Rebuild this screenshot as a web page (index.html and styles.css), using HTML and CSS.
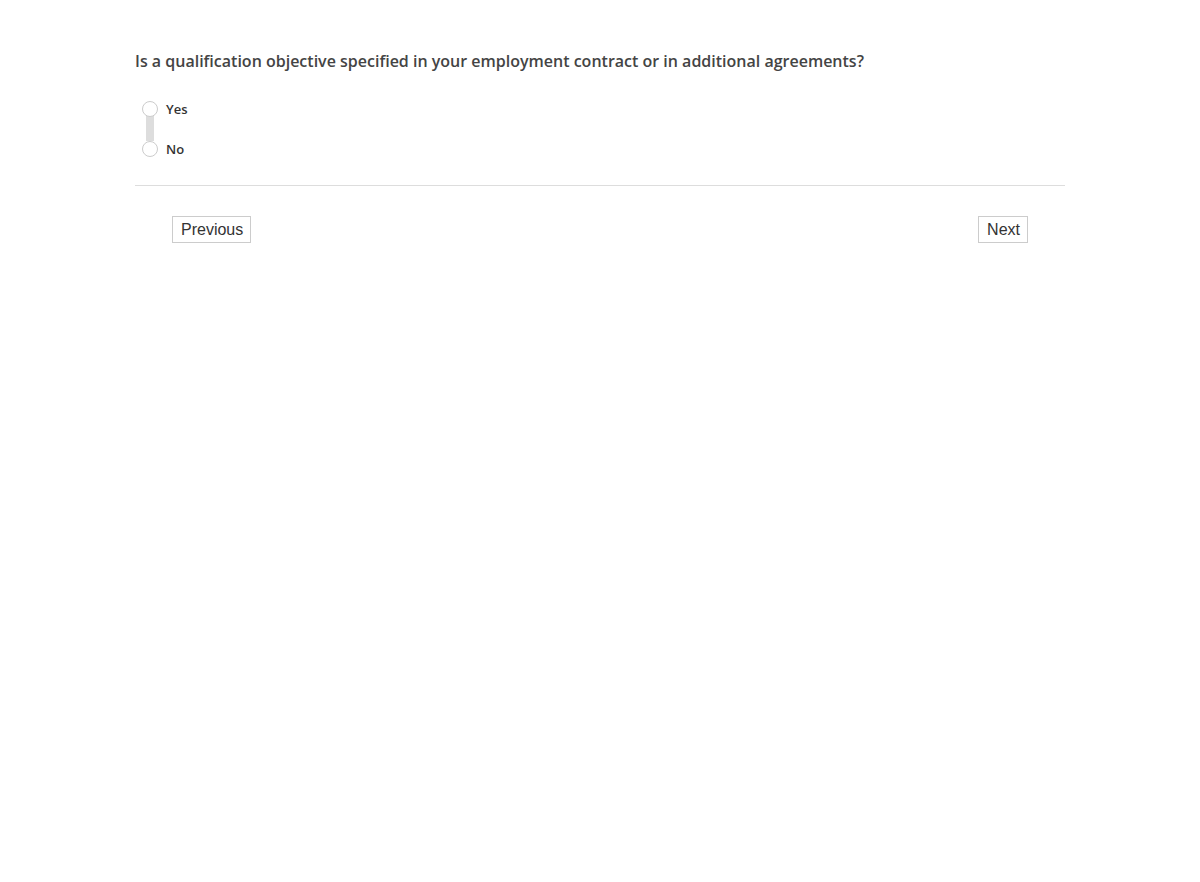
FILE: index.html
```html
<!DOCTYPE html>
<html>
<head>
<meta charset="utf-8">
<link rel="stylesheet" href="styles.css">
</head>
<body>
<div class="survey">
  <h2 class="question">Is a qualification objective specified in your employment contract or in additional agreements?</h2>
  <div class="options">
    <div class="track"></div>
    <label class="option"><span class="radio"></span><span class="label">Yes</span></label>
    <label class="option"><span class="radio"></span><span class="label">No</span></label>
  </div>
  <div class="nav">
    <button class="btn">Previous</button>
    <button class="btn">Next</button>
  </div>
</div>
</body>
</html>
```
FILE: styles.css
```css
html, body { margin: 0; padding: 0; background: #fff; }
.survey {
  width: 930px;
  margin: 0 auto;
  padding-top: 50px;
  font-family: "Open Sans", sans-serif;
}
.question {
  margin: 0;
  font-size: 16px;
  font-weight: 600;
  color: #444;
  line-height: 22px;
}
.options {
  position: relative;
  margin-top: 29px;
  padding-left: 7px;
  display: flex;
  flex-direction: column;
  gap: 24px;
  padding-bottom: 28px;
  border-bottom: 1px solid #ddd;
}
.track {
  position: absolute;
  left: 11px;
  top: 14px;
  width: 8px;
  height: 26px;
  background: #ddd;
}
.option {
  position: relative;
  display: flex;
  align-items: center;
  height: 16px;
}
.radio {
  width: 14px;
  height: 14px;
  border: 1px solid #ccc;
  border-radius: 50%;
  background: #fff;
  box-sizing: content-box;
}
.label {
  margin-left: 8px;
  font-size: 13px;
  font-weight: 600;
  color: #333;
}
.nav {
  display: flex;
  justify-content: space-between;
  padding: 30px 37px 0 37px;
}
.btn {
  font-family: "Liberation Sans", Arial, sans-serif;
  font-size: 16px;
  color: #333;
  background: #fff;
  border: 1px solid #ccc;
  height: 27px;
  padding: 0 7px 0 8px;
  margin: 0;
  line-height: 25px;
}
```
